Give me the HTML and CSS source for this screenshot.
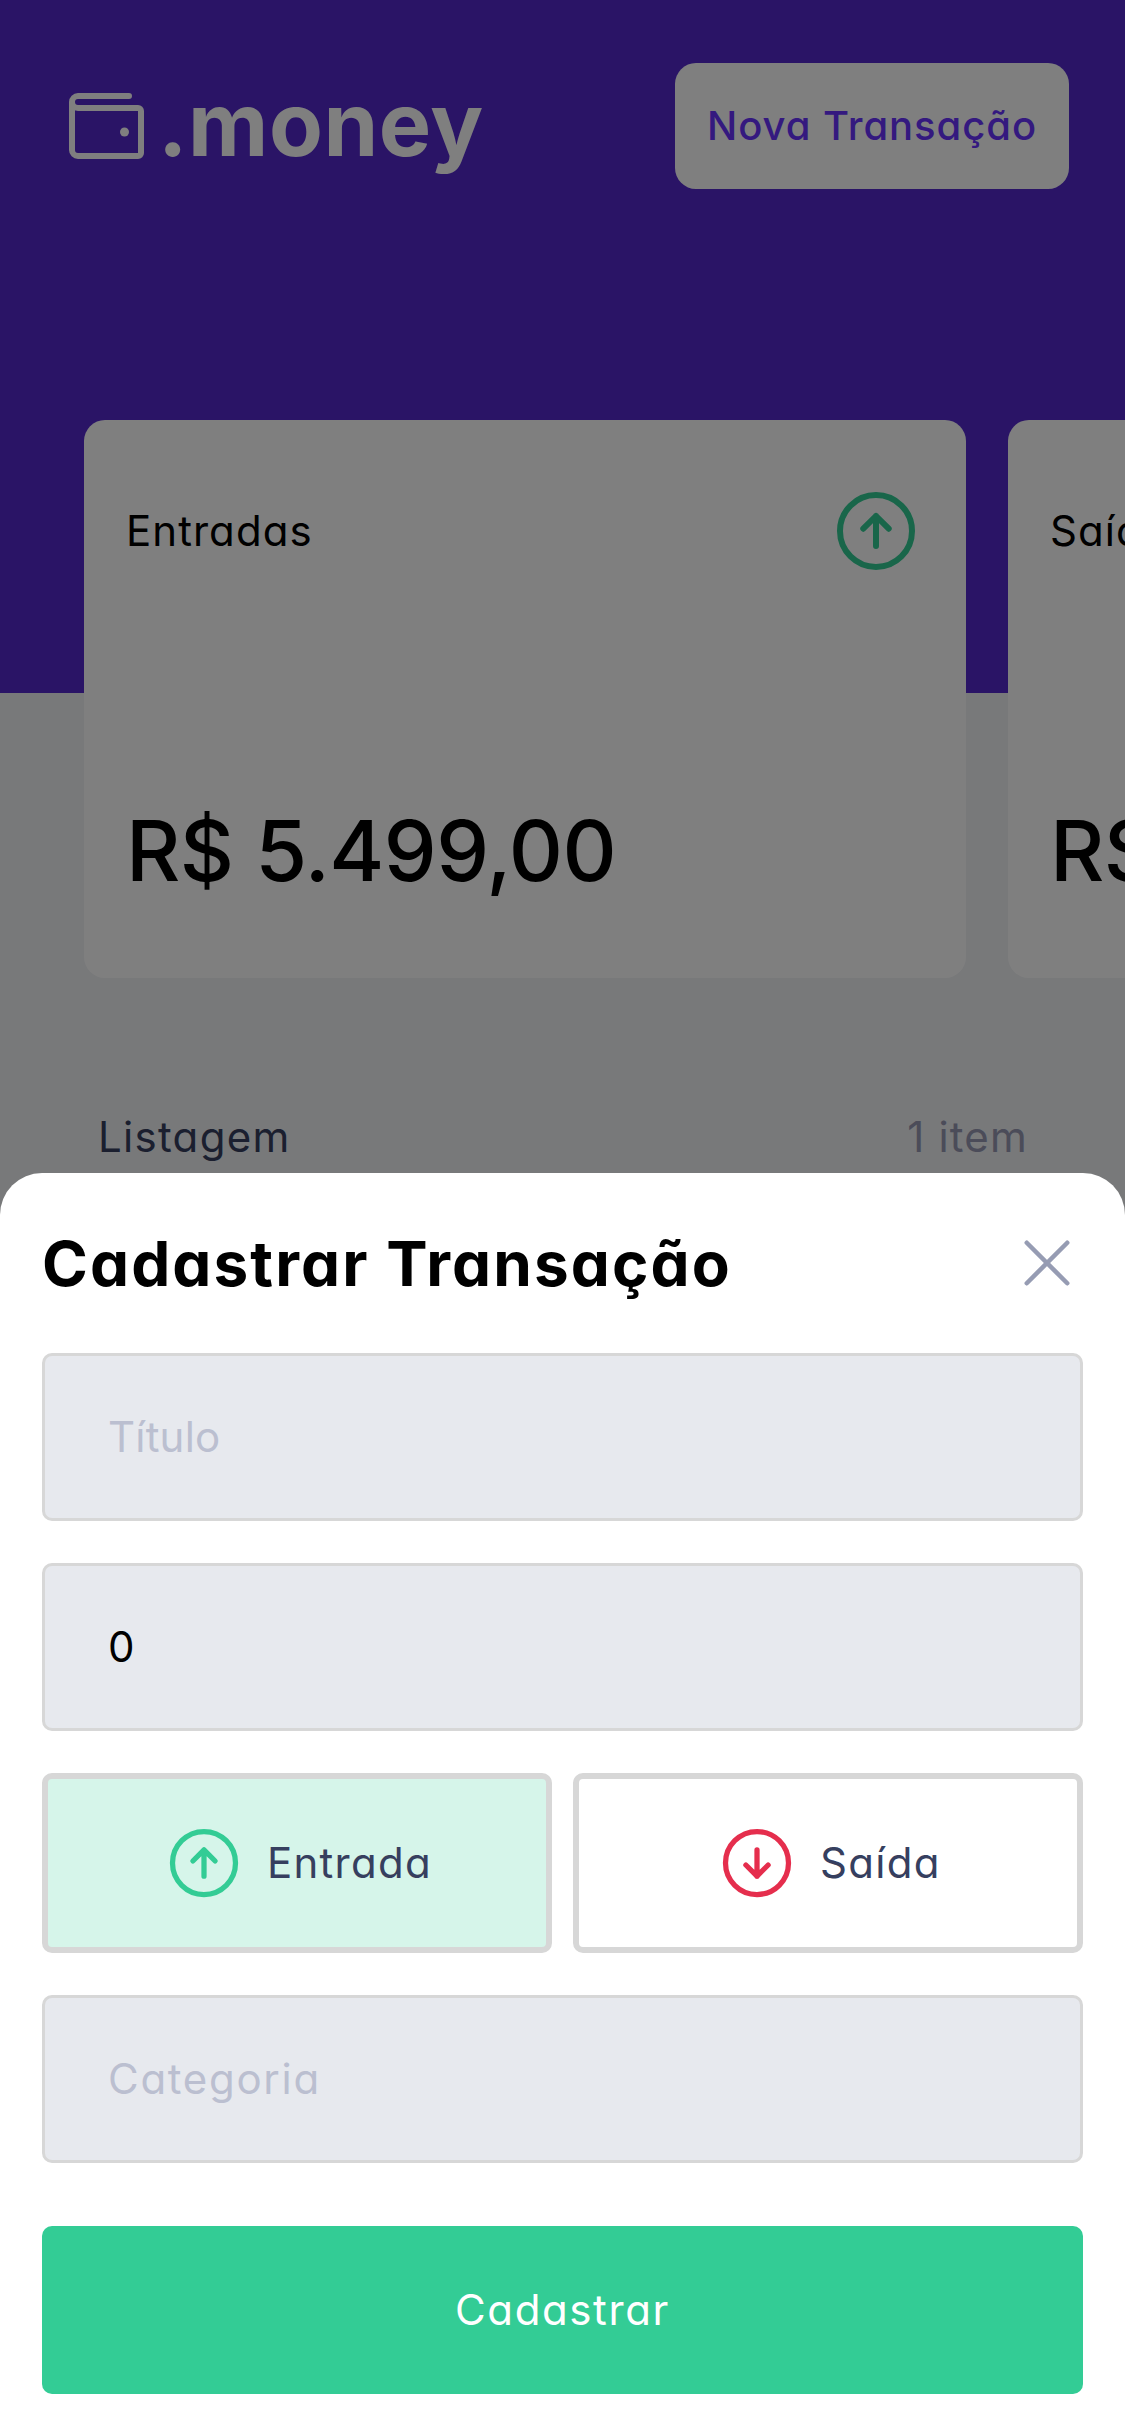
FILE: index.html
```html
<!DOCTYPE html>
<html lang="pt-BR">
<head>
  <meta charset="utf-8">
  <title>.money</title>
  <link rel="stylesheet" href="styles.css">
</head>
<body>
  <div class="screen">
    <header class="header">
      <div class="logo">
        <svg class="logo-icon" viewBox="0 0 256 256" aria-hidden="true">
          <path class="stroke" d="M40,56V184a16,16,0,0,0,16,16H216a8,8,0,0,0,8-8V80a8,8,0,0,0-8-8H56A16,16,0,0,1,40,56h0A16,16,0,0,1,56,40H192"/>
          <circle class="dot" cx="180" cy="136" r="12"/>
        </svg>
        <span class="logo-text">.money</span>
      </div>
      <button class="new-button" type="button">Nova Transação</button>
    </header>

    <section class="cards">
      <article class="card">
        <div class="card-head">
          <span class="card-title">Entradas</span>
          <svg class="card-icon income" viewBox="0 0 256 256" aria-hidden="true">
            <circle class="stroke" cx="128" cy="128" r="96"/>
            <path class="stroke" d="M94.1,121.9L128,88l33.9,33.9M128,168V88"/>
          </svg>
        </div>
        <strong class="card-value">R$ 5.499,00</strong>
      </article>
      <article class="card">
        <div class="card-head">
          <span class="card-title">Saídas</span>
          <svg class="card-icon outcome" viewBox="0 0 256 256" aria-hidden="true">
            <circle class="stroke" cx="128" cy="128" r="96"/>
            <path class="stroke" d="M94.1,134.1L128,168l33.9-33.9M128,88v80"/>
          </svg>
        </div>
        <strong class="card-value">R$ 0,00</strong>
      </article>
    </section>

    <div class="list-head">
      <span class="list-title">Listagem</span>
      <span class="list-count">1 item</span>
    </div>

    <div class="overlay">
      <form class="sheet">
        <div class="sheet-head">
          <h1 class="sheet-title">Cadastrar Transação</h1>
          <svg class="close" viewBox="0 0 256 256" aria-label="Fechar">
            <path class="stroke" d="M200,56L56,200M200,200L56,56"/>
          </svg>
        </div>
        <input class="field field-title" type="text" placeholder="Título">
        <input class="field" type="text" value="0">
        <div class="types">
          <button class="type type-selected" type="button">
            <svg class="type-icon income" viewBox="0 0 256 256" aria-hidden="true">
              <circle class="stroke" cx="128" cy="128" r="96"/>
              <path class="stroke" d="M94.1,121.9L128,88l33.9,33.9M128,168V88"/>
            </svg>
            <span class="type-label">Entrada</span>
          </button>
          <button class="type" type="button">
            <svg class="type-icon outcome" viewBox="0 0 256 256" aria-hidden="true">
              <circle class="stroke" cx="128" cy="128" r="96"/>
              <path class="stroke" d="M94.1,134.1L128,168l33.9-33.9M128,88v80"/>
            </svg>
            <span class="type-label">Saída</span>
          </button>
        </div>
        <input class="field field-category" type="text" placeholder="Categoria">
        <button class="submit" type="button">Cadastrar</button>
      </form>
    </div>
  </div>
</body>
</html>
```

FILE: styles.css
```css
* {
  box-sizing: border-box;
  margin: 0;
}

body,
button,
input {
  font-family: Inter, "Noto Sans", sans-serif;
  font-size: 42px;
  font-feature-settings: "cv11" 1;
}

button,
input {
  border: 0;
  padding: 0;
  outline: 0;
}

.stroke {
  fill: none;
  stroke: currentColor;
  stroke-width: 16;
  stroke-linecap: round;
  stroke-linejoin: round;
}

.dot {
  fill: currentColor;
}

.income {
  color: #33cc95;
}

.outcome {
  color: #e52e4d;
}

.screen {
  position: relative;
  width: 1125px;
  height: 2436px;
  overflow: hidden;
  background: #f0f2f5;
}

/* Header */

.header {
  display: flex;
  justify-content: space-between;
  align-items: flex-start;
  height: 693px;
  padding: 63px 56px 0 57px;
  background: #5429cc;
}

.logo {
  display: flex;
  align-items: center;
  gap: 5px;
  height: 126px;
  color: #fff;
}

.logo-icon {
  width: 96px;
  height: 96px;
  margin-top: 6px;
}

.logo-text {
  margin-bottom: 5px;
  font-size: 88px;
  font-weight: 700;
  letter-spacing: 0.6px;
}

.new-button {
  width: 394px;
  height: 126px;
  padding-bottom: 2px;
  border-radius: 21px;
  background: #fff;
  color: #6933ff;
  font-size: 40px;
  font-weight: 500;
  letter-spacing: 0.95px;
}

/* Summary cards */

.cards {
  display: flex;
  gap: 42px;
  margin-top: -273px;
  padding-left: 84px;
}

.card {
  display: flex;
  flex: 0 0 882px;
  flex-direction: column;
  justify-content: space-between;
  height: 558px;
  padding: 63px 42px;
  border-radius: 21px;
  background: #fff;
  color: #000;
}

.card-head {
  display: flex;
  justify-content: space-between;
  align-items: center;
}

.card-title {
  margin-bottom: 2px;
  letter-spacing: 1.05px;
}

.card-icon {
  width: 96px;
  height: 96px;
}

.card-value {
  font-size: 84px;
  font-weight: 500;
  line-height: 129px;
  letter-spacing: -0.6px;
}

/* List */

.list-head {
  display: flex;
  justify-content: space-between;
  margin-top: 128px;
  padding: 0 97px 0 98px;
  line-height: 62px;
}

.list-title {
  color: #363f5f;
  letter-spacing: 1.3px;
}

.list-count {
  color: #9698b3;
  letter-spacing: 1.2px;
}

/* Bottom sheet */

.overlay {
  position: absolute;
  inset: 0;
  display: flex;
  align-items: flex-end;
  background: rgba(0, 0, 0, 0.5);
}

.sheet {
  display: flex;
  flex-direction: column;
  gap: 42px;
  width: 100%;
  padding: 42px;
  border-radius: 42px 42px 0 0;
  background: #fff;
}

.sheet-head {
  display: flex;
  justify-content: space-between;
  align-items: center;
  height: 96px;
}

.sheet-title {
  font-size: 62px;
  font-weight: 700;
  letter-spacing: 2.1px;
}

.close {
  width: 72px;
  height: 72px;
  color: #969cb3;
}

.field {
  width: 100%;
  height: 168px;
  padding: 0 63px 2px;
  border: 3px solid #d7d7d7;
  border-radius: 10px;
  background: #e7e9ee;
  color: #000;
}

.field::placeholder {
  color: #bbbfd0;
  opacity: 1;
}

.field-title {
  letter-spacing: 0.2px;
}

.field-category {
  letter-spacing: 1.7px;
}

.types {
  display: flex;
  gap: 21px;
}

.type {
  display: flex;
  flex: 1;
  justify-content: center;
  align-items: center;
  gap: 21px;
  height: 180px;
  border: 6px solid #d7d7d7;
  border-radius: 10px;
  background: #fff;
  color: #363f5f;
  letter-spacing: 1.3px;
}

.type-selected {
  background: #d6f5ea;
}

.type-icon {
  width: 84px;
  height: 84px;
}

.type-label {
  margin-bottom: 2px;
}

.submit {
  height: 168px;
  margin-top: 21px;
  padding-bottom: 2px;
  border-radius: 10px;
  background: #33cc95;
  color: #fff;
  letter-spacing: 1.6px;
}
```
